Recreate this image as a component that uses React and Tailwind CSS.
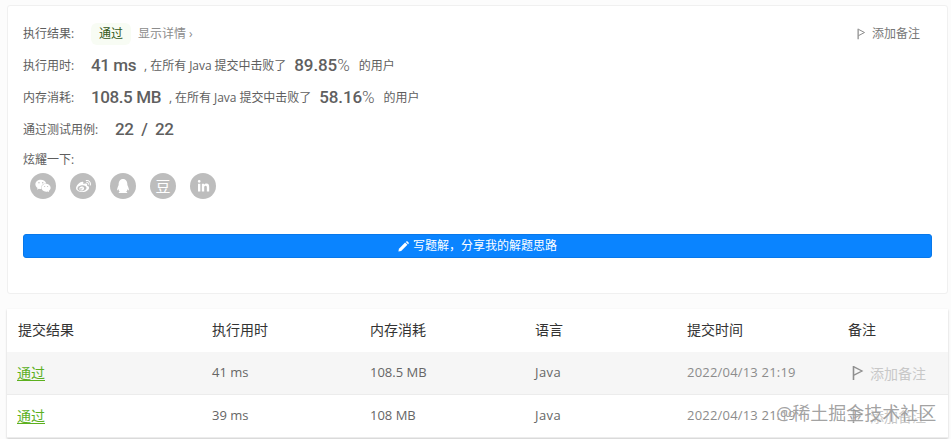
import React from "react";
import { FaWeixin, FaWeibo, FaQq, FaLinkedinIn } from "react-icons/fa";

const Flag = ({ className }) => (
  <svg viewBox="0 0 12 16" fill="none" className={className}>
    <path d="M1.5 1v14" stroke="currentColor" strokeWidth="1.6" />
    <path d="M2 1.8 L10 6 L2 10.2" stroke="currentColor" strokeWidth="1.3" strokeLinejoin="miter" />
  </svg>
);

const Pencil = () => (
  <svg viewBox="0 0 12 12" className="w-[11px] h-[11px]" fill="white">
    <path d="M0.5 11.5 L1 8.5 L7.8 1.7 L10.3 4.2 L3.5 11 Z" />
    <path d="M8.5 1 L9.4 0.3 Q9.8 0 10.2 0.3 L11.7 1.8 Q12 2.2 11.7 2.6 L11 3.5 Z" />
  </svg>
);

const Social = ({ children }) => (
  <div className="w-[26px] h-[26px] rounded-full bg-[#bdbdbd] flex items-center justify-center text-white">{children}</div>
);

const Label = ({ children, className = "" }) => (
  <span className={`text-[12px] text-[#5e5e5e] ${className}`}>{children}</span>
);

const Num = ({ children, className = "tracking-[-0.4px]" }) => (
  <span className={`text-[17px] font-medium text-[#5f5f5f] font-['Roboto',sans-serif] ${className}`}>{children}</span>
);

const Stat = ({ label, value, percent }) => (
  <div className="flex items-center h-[24px]">
    <Label className="w-[68px]">{label}</Label>
    <Num>{value}</Num>
    <Label className="ml-[8px] tracking-[-0.05px]">, 在所有 Java 提交中击败了</Label>
    <Num className="ml-[8px] tracking-[-0.1px]">
      {percent}
      <span className="font-light">%</span>
    </Num>
    <Label className="ml-[9px]">的用户</Label>
  </div>
);

const Row = ({ bg, time, mem, date }) => (
  <div className={`flex items-center h-[43px] text-[13px] border-b border-[#ececec] ${bg}`}>
    <span className="w-[205px] pl-[10px] pb-[2px] text-[14px] text-[#5cb01e] underline underline-offset-2">通过</span>
    <span className="w-[158px] text-[#666]">{time}</span>
    <span className="w-[165px] text-[#666]">{mem}</span>
    <span className="w-[152px] text-[#666] tracking-[0.4px]">Java</span>
    <span className="w-[161px] text-[#8c8c8c] tracking-[0.2px]">{date}</span>
    <span className="ml-[4px] flex items-center gap-[6px] text-[14px] text-[#c8c8c8]">
      <Flag className="w-[12px] h-[16px] text-[#8f8f8f]" />
      添加备注
    </span>
  </div>
);

export default function App() {
  return (
    <div className="relative w-[951px] h-[439px] overflow-hidden bg-[#fcfcfc] pt-[5px] px-[7px] font-['Open_Sans','Noto_Sans_CJK_SC',sans-serif]">
      <div className="w-[941px] h-[289px] bg-white border border-[#f0f0f0] rounded-[3px] pl-[15px] pr-[15px] pt-[16px]">
        <div className="flex items-center h-[24px]">
          <Label className="w-[68px]">执行结果:</Label>
          <span className="w-[40px] h-[22px] flex items-center justify-center text-[12px] text-[#33591a] bg-[#f8fcf4] rounded-[6px] mr-[7px]">通过</span>
          <span className="text-[12px] text-[#8c8c8c]">显示详情 ›</span>
          <span className="ml-auto mr-[12px] flex items-center gap-[6px] text-[12px] text-[#777]">
            <Flag className="w-[9px] h-[12px] text-[#888]" />
            添加备注
          </span>
        </div>
        <div className="mt-[8px] flex flex-col gap-[8px]">
          <Stat label="执行用时:" value="41 ms" percent="89.85" />
          <Stat label="内存消耗:" value="108.5 MB" percent="58.16" />
          <div className="flex items-center h-[24px]">
            <Label className="w-[92px]">通过测试用例:</Label>
            <Num>22&nbsp; /&nbsp; 22</Num>
          </div>
        </div>
        <div className="mt-[9px] h-[18px] flex items-center">
          <Label>炫耀一下:</Label>
        </div>
        <div className="flex gap-[14px] pl-[7px] mt-[4px]">
          <Social><FaWeixin size={16} /></Social>
          <Social><FaWeibo size={15} /></Social>
          <Social><FaQq size={14} /></Social>
          <Social>
            <span className="text-[15px] leading-none font-normal">豆</span>
          </Social>
          <Social><FaLinkedinIn size={13} /></Social>
        </div>
        <div className="mt-[35px] h-[24px] w-[909px] rounded-[3px] bg-[#0a84ff] flex items-center justify-center gap-[4px] text-[12px] text-white border border-[#0878ea]">
          <Pencil />
          写题解，分享我的解题思路
        </div>
      </div>
      <div className="mt-[15px] w-[941px] bg-white shadow-[0_1px_2px_rgba(0,0,0,0.2)]">
        <div className="flex items-center h-[43px] pb-[2px] text-[14px] text-[#333]">
          <span className="w-[205px] pl-[11px]">提交结果</span>
          <span className="w-[158px]">执行用时</span>
          <span className="w-[165px]">内存消耗</span>
          <span className="w-[152px]">语言</span>
          <span className="w-[161px]">提交时间</span>
          <span>备注</span>
        </div>
        <Row bg="bg-[#f6f6f6]" time="41 ms" mem="108.5 MB" date="2022/04/13 21:19" />
        <Row bg="bg-white" time="39 ms" mem="108 MB" date="2022/04/13 21:19" />
      </div>
      <div className="absolute left-[776px] top-[402px] text-[18px] leading-[22px] text-[#8a8a8a]/80 [text-shadow:0_0_2px_white]">@稀土掘金技术社区</div>
    </div>
  );
}
